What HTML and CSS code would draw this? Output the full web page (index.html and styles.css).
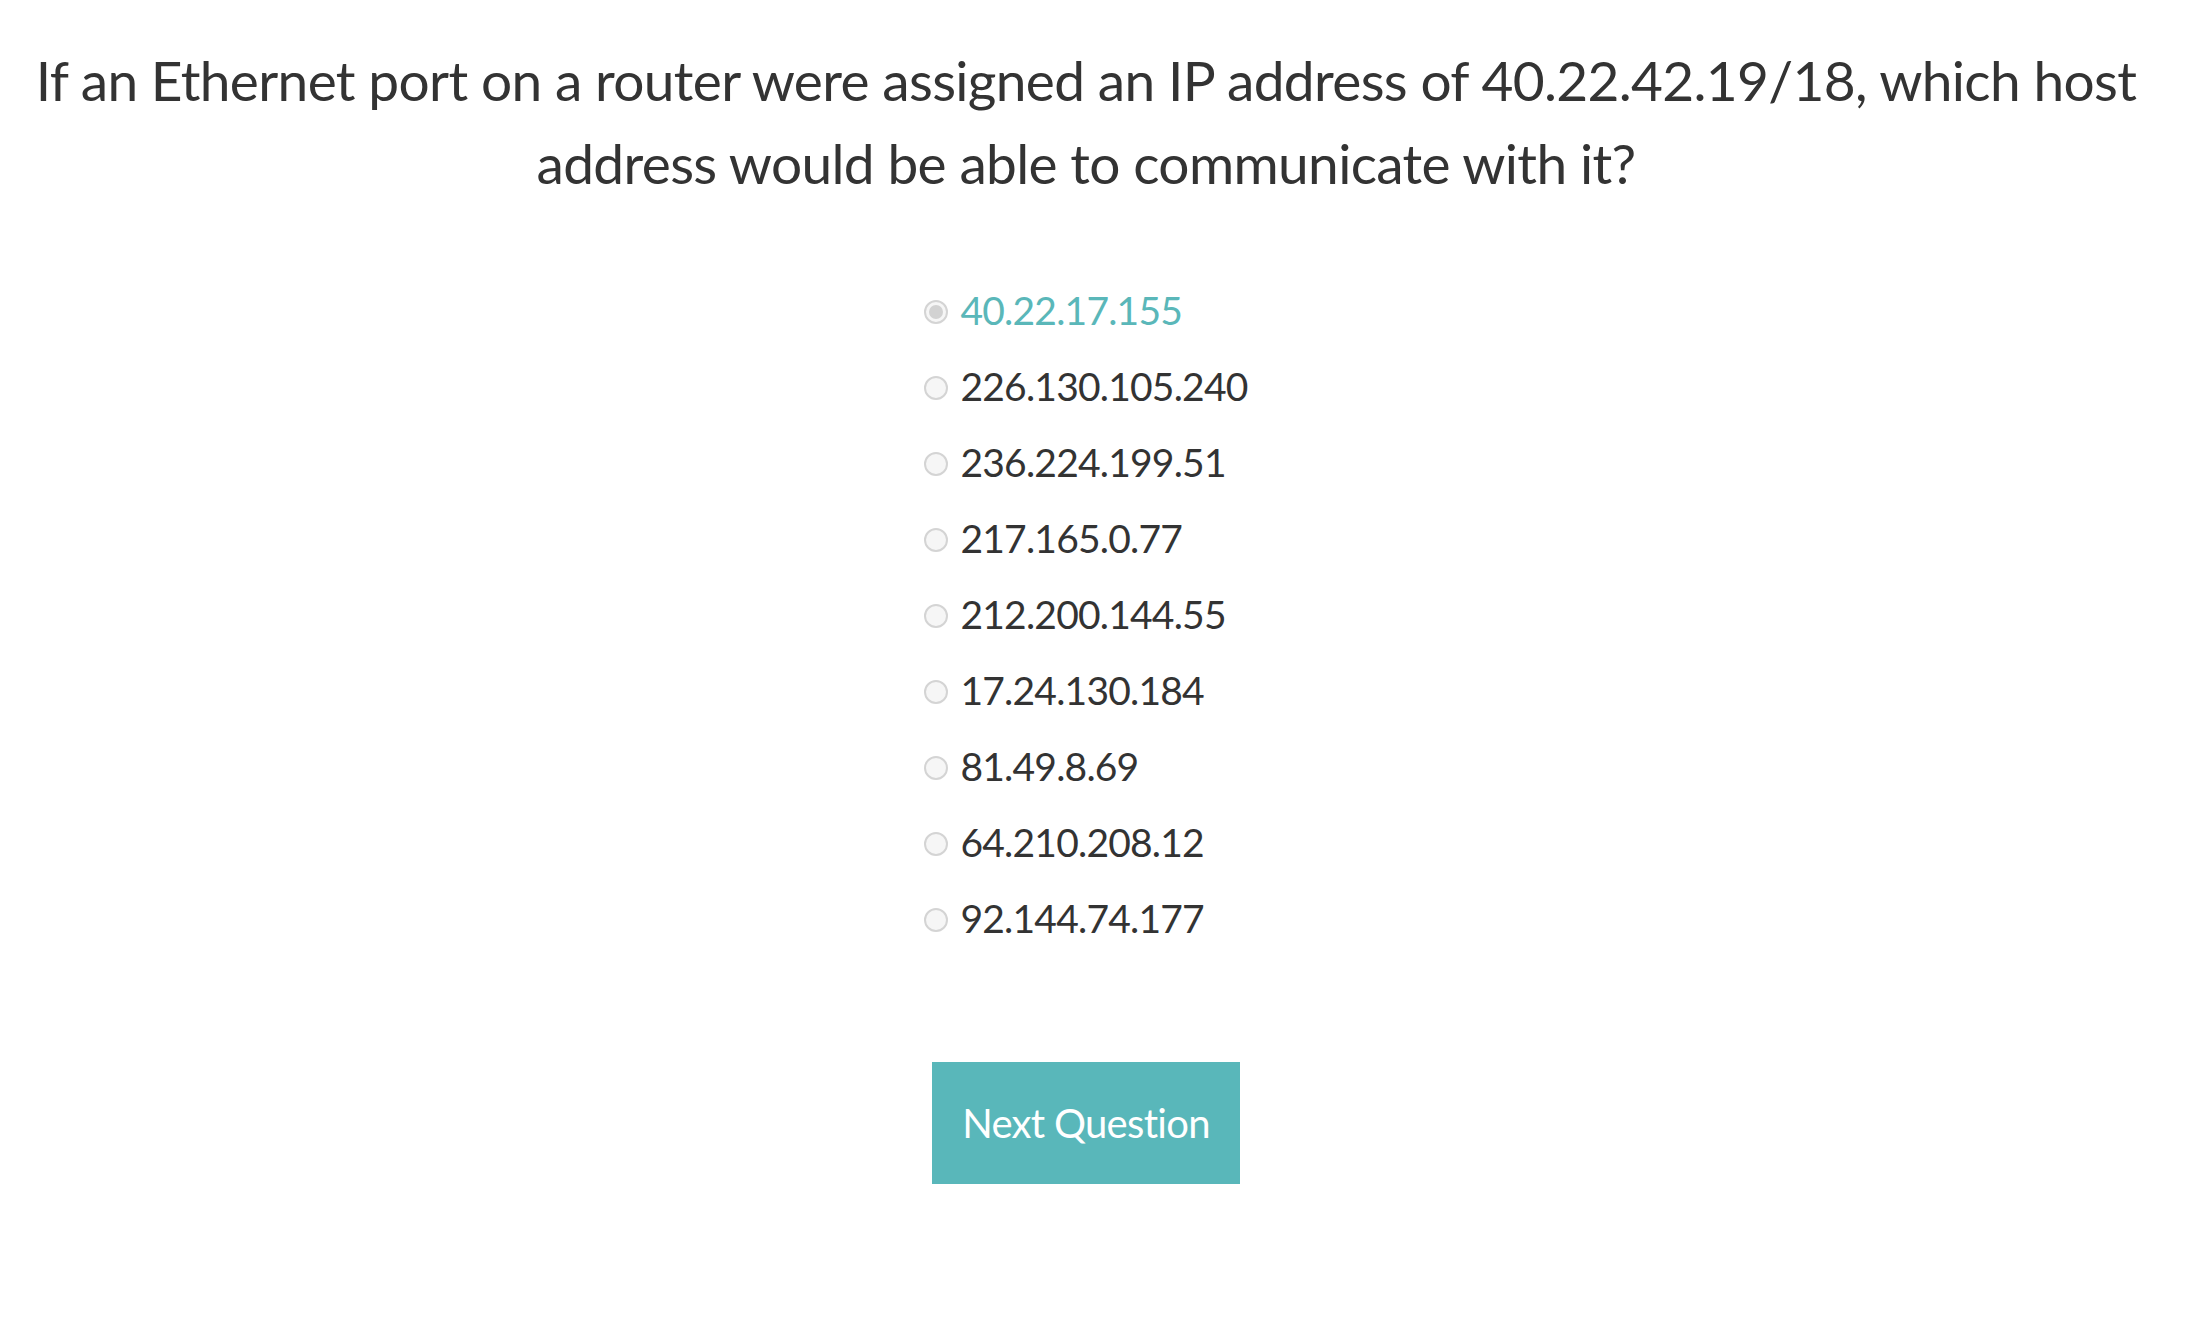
FILE: index.html
```html
<!DOCTYPE html>
<html lang="en">
<head>
<meta charset="utf-8">
<title>Quiz</title>
<link rel="stylesheet" href="styles.css">
</head>
<body>
<main class="page">
  <h1 class="question">If an Ethernet port on a router were assigned an IP address of 40.22.42.19/18, which host address would be able to communicate with it?</h1>
  <form class="answers">
    <label class="answer selected"><input type="radio" name="a" checked><span>40.22.17.155</span></label>
    <label class="answer"><input type="radio" name="a"><span>226.130.105.240</span></label>
    <label class="answer"><input type="radio" name="a"><span>236.224.199.51</span></label>
    <label class="answer"><input type="radio" name="a"><span>217.165.0.77</span></label>
    <label class="answer"><input type="radio" name="a"><span>212.200.144.55</span></label>
    <label class="answer"><input type="radio" name="a"><span>17.24.130.184</span></label>
    <label class="answer"><input type="radio" name="a"><span>81.49.8.69</span></label>
    <label class="answer"><input type="radio" name="a"><span>64.210.208.12</span></label>
    <label class="answer"><input type="radio" name="a"><span>92.144.74.177</span></label>
  </form>
  <div class="actions">
    <button class="next" type="button">Next Question</button>
  </div>
</main>
</body>
</html>
```
FILE: styles.css
```css
html, body {
  margin: 0;
  padding: 0;
  background: #ffffff;
}
body {
  font-family: Lato, "Liberation Sans", sans-serif;
  color: #333333;
}
.page {
  padding: 39px 40px 0 0;
  display: flex;
  flex-direction: column;
  align-items: center;
}
.question {
  margin: 0;
  max-width: 2130px;
  font-size: 55px;
  line-height: 83px;
  font-weight: 400;
  text-align: center;
  letter-spacing: -0.65px;
}
.answers {
  margin-top: 67px;
  display: flex;
  flex-direction: column;
  align-items: flex-start;
}
.answer {
  height: 76px;
  display: flex;
  align-items: center;
  gap: 12px;
  font-size: 39px;
  letter-spacing: -0.8px;
  cursor: pointer;
}
.answer input {
  appearance: none;
  -webkit-appearance: none;
  margin: 4px 0 0 0;
  width: 24px;
  height: 24px;
  border-radius: 50%;
  border: 2px solid #d4d4d4;
  background: #f6f6f6;
  box-sizing: border-box;
  display: grid;
  place-items: center;
}
.answer input:checked::after {
  content: "";
  width: 14px;
  height: 14px;
  border-radius: 50%;
  background: #d2d2d2;
}
.answer.selected {
  color: #5ab7b9;
}
.actions {
  margin-top: 106px;
}
.next {
  width: 308px;
  height: 122px;
  border: none;
  background: #59b7ba;
  color: #ffffff;
  font-family: Lato, "Liberation Sans", sans-serif;
  font-size: 40px;
  letter-spacing: -0.7px;
  cursor: pointer;
  padding: 0;
}
```
